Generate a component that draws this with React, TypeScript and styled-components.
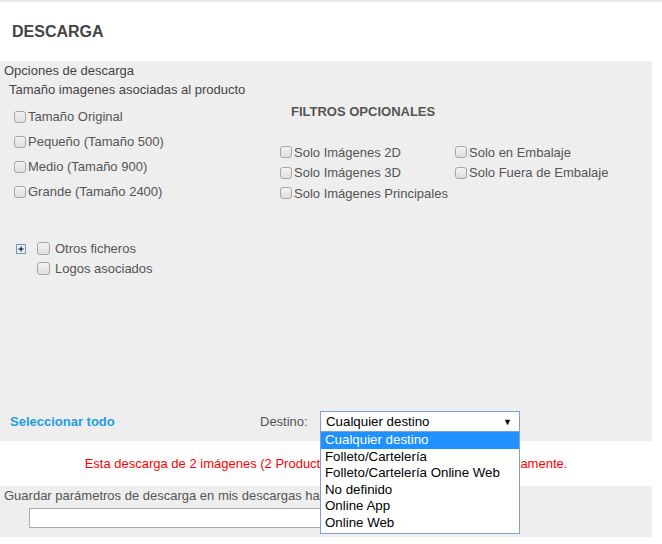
import React from 'react';
import styled, {createGlobalStyle} from 'styled-components';

const GlobalStyle = createGlobalStyle`
  html, body {
    margin: 0;
    padding: 0;
    background: #ffffff;
  }
  body {
    font-family: "Liberation Sans", Arial, sans-serif;
    font-size: 13px;
    color: #555555;
  }
`;

const Page = styled.div`
  width: 662px;
  border-top: 2px solid #e8e8e8;
`;

const Header = styled.div`
  height: 59px;
  display: flex;
  align-items: center;
  padding-left: 12px;
`;

const Title = styled.h1`
  margin: 0;
  font-size: 16px;
  font-weight: bold;
  color: #444444;
`;

const OptionsPanel = styled.div`
  width: 652px;
  height: 380px;
  box-sizing: border-box;
  background: #eeeeee;
  display: flex;
  flex-direction: column;
  padding: 2px 0 9px 0;
`;

const Caption = styled.div<{$indent: number}>`
  line-height: 16px;
  padding-left: ${p => p.$indent}px;
  color: #444444;
  margin-bottom: 3px;
`;

const Columns = styled.div`
  display: flex;
  margin-top: 3px;
`;

const SizeColumn = styled.div`
  width: 266px;
  padding-left: 14px;
  display: flex;
  flex-direction: column;
`;

const FilterColumn = styled.div`
  display: flex;
  flex-direction: column;
`;

const FilterTitle = styled.div`
  font-weight: bold;
  color: #555555;
  line-height: 16px;
  padding-left: 11px;
  margin-bottom: 22px;
`;

const FilterGrid = styled.div`
  display: grid;
  grid-template-columns: 175px auto;
  grid-auto-rows: 20.5px;
`;

const CheckRow = styled.label<{$height: number}>`
  display: flex;
  align-items: center;
  height: ${p => p.$height}px;
  color: #555555;
  white-space: nowrap;
`;

const Check = styled.input.attrs({type: 'checkbox'})<{$size?: number}>`
  appearance: none;
  margin: 0 2px 0 0;
  width: ${p => p.$size || 12}px;
  height: ${p => p.$size || 12}px;
  border: 1px solid #a7a7a7;
  border-radius: 3px;
  box-sizing: border-box;
  background: linear-gradient(#f3f3f3, #dedede);
  flex-shrink: 0;
`;

const ExtraBlock = styled.div`
  margin-top: 34px;
  padding-left: 16px;
  display: flex;
  flex-direction: column;
`;

const ExtraRow = styled.div<{$indent: number}>`
  display: flex;
  align-items: center;
  height: 20px;
  padding-left: ${p => p.$indent}px;
  color: #555555;
`;

const ExpandBox = styled.span`
  display: inline-flex;
  width: 10px;
  height: 10px;
  margin-right: 11px;
  margin-top: 1px;
`;

const ExtraCheck = styled(Check)`
  margin-right: 5px;
`;

const BottomRow = styled.div`
  margin-top: auto;
  display: flex;
  align-items: center;
  height: 21px;
`;

const SelectAll = styled.a`
  font-weight: bold;
  color: #1e9ddc;
  padding-left: 10px;
  width: 250px;
  cursor: pointer;
`;

const DestinoLabel = styled.span`
  color: #555555;
  width: 60px;
`;

const SelectWrap = styled.div`
  position: relative;
`;

const SelectBox = styled.div`
  width: 200px;
  height: 21px;
  box-sizing: border-box;
  border: 1px solid #7f9fd6;
  background: #ffffff;
  color: #000000;
  font-size: 13.3px;
  display: flex;
  align-items: center;
  justify-content: space-between;
  padding: 0 7px 0 5px;
`;

const Arrow = styled.span`
  font-size: 9px;
`;

const OptionList = styled.ul`
  position: absolute;
  top: 20px;
  left: 0;
  width: 200px;
  box-sizing: border-box;
  margin: 0;
  padding: 0 0 1px 0;
  list-style: none;
  background: #ffffff;
  border: 1px solid #7f9fd6;
  z-index: 2;
`;

const OptionItem = styled.li<{$selected?: boolean}>`
  height: 16.6px;
  line-height: 16.6px;
  padding-left: 4px;
  font-size: 13.3px;
  color: ${p => (p.$selected ? '#ffffff' : '#000000')};
  background: ${p => (p.$selected ? '#1e90ff' : 'transparent')};
  white-space: nowrap;
`;

const Notice = styled.div`
  width: 652px;
  height: 45px;
  display: flex;
  align-items: center;
  justify-content: center;
  color: #ff0000;
`;

const SavePanel = styled.div`
  width: 652px;
  height: 51px;
  box-sizing: border-box;
  background: #eeeeee;
  padding-top: 2px;
`;

const SaveLabel = styled.div`
  line-height: 16px;
  padding-left: 4px;
  color: #555555;
`;

const NameInput = styled.input`
  display: block;
  margin: 4px 0 0 29px;
  width: 420px;
  height: 20px;
  box-sizing: border-box;
  border: 1px solid #aaaaaa;
  background: #ffffff;
  padding: 0 4px;
`;

const sizes = ['Tamaño Original', 'Pequeño (Tamaño 500)', 'Medio (Tamaño 900)', 'Grande (Tamaño 2400)'];

const filters = [
  'Solo Imágenes 2D',
  'Solo en Embalaje',
  'Solo Imágenes 3D',
  'Solo Fuera de Embalaje',
  'Solo Imágenes Principales',
];

const destinos = [
  'Cualquier destino',
  'Folleto/Cartelería',
  'Folleto/Cartelería Online Web',
  'No definido',
  'Online App',
  'Online Web',
];

const PlusIcon: React.FC = () => (
  <svg width="10" height="10" viewBox="0 0 10 10">
    <rect x="0.5" y="0.5" width="9" height="9" fill="#e4ecf7" stroke="#7b93b8" />
    <path d="M2.5 5h5M5 2.5v5" stroke="#000" strokeWidth="1" />
  </svg>
);

export default function App() {
  return (
    <Page>
      <GlobalStyle />
      <Header>
        <Title>DESCARGA</Title>
      </Header>
      <OptionsPanel>
        <Caption $indent={4}>Opciones de descarga</Caption>
        <Caption $indent={9}>Tamaño imagenes asociadas al producto</Caption>
        <Columns>
          <SizeColumn>
            {sizes.map(s => (
              <CheckRow key={s} $height={25}>
                <Check />
                {s}
              </CheckRow>
            ))}
          </SizeColumn>
          <FilterColumn>
            <FilterTitle>FILTROS OPCIONALES</FilterTitle>
            <FilterGrid>
              {filters.map(f => (
                <CheckRow key={f} $height={20}>
                  <Check />
                  {f}
                </CheckRow>
              ))}
            </FilterGrid>
          </FilterColumn>
        </Columns>
        <ExtraBlock>
          <ExtraRow $indent={0}>
            <ExpandBox>
              <PlusIcon />
            </ExpandBox>
            <ExtraCheck $size={13} />
            Otros ficheros
          </ExtraRow>
          <ExtraRow $indent={21}>
            <ExtraCheck $size={13} />
            Logos asociados
          </ExtraRow>
        </ExtraBlock>
        <BottomRow>
          <SelectAll>Seleccionar todo</SelectAll>
          <DestinoLabel>Destino:</DestinoLabel>
          <SelectWrap>
            <SelectBox>
              <span>Cualquier destino</span>
              <Arrow>▼</Arrow>
            </SelectBox>
            <OptionList>
              {destinos.map((d, i) => (
                <OptionItem key={d} $selected={i === 0}>
                  {d}
                </OptionItem>
              ))}
            </OptionList>
          </SelectWrap>
        </BottomRow>
      </OptionsPanel>
      <Notice>Esta descarga de 2 imágenes (2 Productos) se generará y enviará inmediatamente.</Notice>
      <SavePanel>
        <SaveLabel>Guardar parámetros de descarga en mis descargas habituales con el nombre:</SaveLabel>
        <NameInput />
      </SavePanel>
    </Page>
  );
}
